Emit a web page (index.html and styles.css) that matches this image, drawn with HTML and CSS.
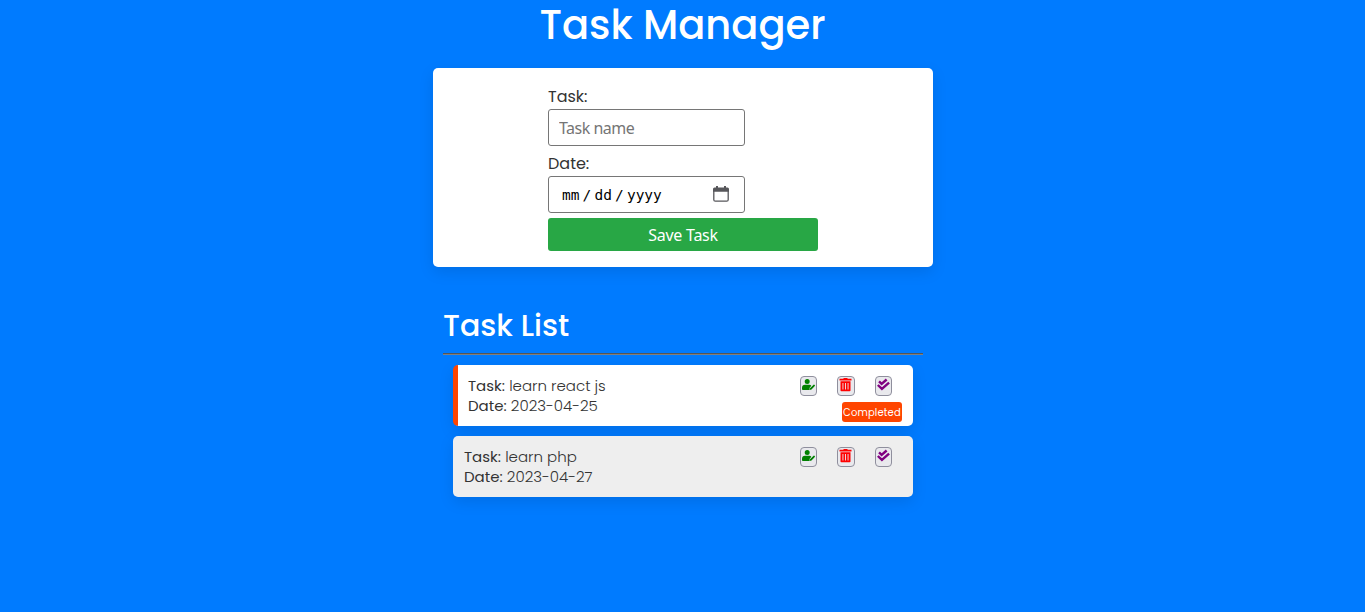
FILE: index.html
```html
<!DOCTYPE html>
<html lang="en">
<head>
<meta charset="utf-8">
<title>Task Manager</title>
<link rel="stylesheet" href="styles.css">
</head>
<body>
<svg class="sprite" aria-hidden="true">
  <symbol id="edit" viewBox="0 0 13 14"><path d="M5.2.9a2.5 2.5 0 1 1 0 5 2.5 2.5 0 0 1 0-5zM3 6.8h4.4q1.3 0 1.9.9L7.7 9.8l-.3 2.1H.8Q0 11.9 0 11V9.9q0-3.1 3-3.1zM8 10.3 11.6 6.8q.4-.4.8 0l.4.4q.4.5 0 .9L9.5 11.6 7.7 12z"/></symbol>
  <symbol id="trash" viewBox="0 0 12 14"><path fill-rule="evenodd" d="M4 0h4v.8h4v1.8H0V.8h4zM1 3.2h10v9.3q0 .8-.8.8H1.8q-.8 0-.8-.8zM3 5v6.5h.9V5zM5.55 5v6.5h.9V5zM8.1 5v6.5H9V5z"/></symbol>
  <symbol id="checks" viewBox="0 0 14 14"><path fill="none" stroke="currentColor" stroke-width="2.6" d="M2.2 3.2 5 5.9 10.4 1.1M.9 7 5.3 11.2 13 4.4"/></symbol>
</svg>
<h1 class="title">Task Manager</h1>
<main class="container">
  <form class="card">
    <div class="fields">
      <label class="label" for="task">Task:</label>
      <input class="input" id="task" type="text" placeholder="Task name">
      <span class="label label-date">Date:</span>
      <div class="input date">
        <span class="date-text">mm / dd / yyyy</span>
        <svg class="calendar" viewBox="0 0 16 16"><path fill="none" stroke="#57575b" stroke-width="1.3" d="M.8 4v9.7q0 1.5 1.5 1.5h11.4q1.5 0 1.5-1.5V4"/><path fill="#57575b" d="M3 0h2v1.5h6V0h2v1.5h1.5Q16 1.5 16 3v2.8H0V3q0-1.5 1.5-1.5H3z"/></svg>
      </div>
      <button class="save" type="button">Save Task</button>
    </div>
  </form>
  <section class="list">
    <h2 class="subtitle">Task List</h2>
    <hr class="rule">
    <article class="item done">
      <div class="details">
        <p class="line"><b class="key">Task:</b> learn react js</p>
        <p class="line"><b class="key">Date:</b> 2023-04-25</p>
      </div>
      <div class="side">
        <div class="actions">
          <button class="action edit" type="button"><svg><use href="#edit"/></svg></button>
          <button class="action trash" type="button"><svg><use href="#trash"/></svg></button>
          <button class="action checks" type="button"><svg><use href="#checks"/></svg></button>
        </div>
        <span class="badge">Completed</span>
      </div>
    </article>
    <article class="item pending">
      <div class="details">
        <p class="line"><b class="key">Task:</b> learn php</p>
        <p class="line"><b class="key">Date:</b> 2023-04-27</p>
      </div>
      <div class="side">
        <div class="actions">
          <button class="action edit" type="button"><svg><use href="#edit"/></svg></button>
          <button class="action trash" type="button"><svg><use href="#trash"/></svg></button>
          <button class="action checks" type="button"><svg><use href="#checks"/></svg></button>
        </div>
      </div>
    </article>
  </section>
</main>
</body>
</html>
```
FILE: styles.css
```css
* { box-sizing: border-box; margin: 0; padding: 0; }
body {
  background: #007bff;
  color: #333;
  font-family: Poppins, Inter, "Open Sans", sans-serif;
  min-height: 612px;
}
.sprite { display: none; }
.title {
  height: 68px;
  color: #fff;
  font-size: 40px;
  font-weight: 500;
  line-height: 50px;
  text-align: center;
}
.container { width: 500px; margin: 0 auto; position: relative; left: .5px; }
.card {
  height: 199px;
  padding: 17px 115px 16px;
  background: #fff;
  border-radius: 5px;
  box-shadow: 0 5px 15px rgba(0, 0, 0, .1);
}
.fields { display: flex; flex-direction: column; align-items: flex-start; }
.label { font-size: 16px; line-height: 24px; }
.label-date { margin-top: 6px; }
.input {
  width: 197px;
  height: 37px;
  padding: 0 10px;
  background: #fff;
  border: 1px solid #767676;
  border-radius: 3px;
  font-family: Tahoma, "Noto Sans", sans-serif;
  font-size: 16px;
  letter-spacing: -.5px;
}
.input::placeholder { color: #757575; }
.date {
  display: flex;
  align-items: center;
  justify-content: space-between;
  padding: 0 15px 2px 13px;
  color: #000;
}
.date-text {
  padding-top: 2px;
  font: 14.5px "DejaVu Sans Mono", monospace;
  letter-spacing: 0;
  word-spacing: -5.6px;
  white-space: nowrap;
}
.calendar { width: 16px; height: 16px; }
.save {
  width: 270px;
  height: 33px;
  margin-top: 5px;
  border: 0;
  border-radius: 3px;
  background: #28a745;
  color: #fff;
  font: 16px Tahoma, "Noto Sans", sans-serif;
  letter-spacing: -.25px;
}
.list { padding: 36px 10px 0; }
.subtitle {
  height: 50px;
  color: #fff;
  font-size: 30px;
  font-weight: 500;
  line-height: 45px;
}
.rule { height: 2px; border: 0; border-top: 1px solid #565656; border-bottom: 1px solid #808080; }
.item {
  display: flex;
  justify-content: space-between;
  height: 61px;
  margin: 10px 10px 0;
  border-radius: 5px;
  box-shadow: 0 5px 15px rgba(0, 0, 0, .1);
}
.done { padding: 11px 11px 0 10px; border-left: 5px solid #ff4500; background: #fff; }
.pending { padding: 11px 11px 0; background: #eee; }
.line { font-size: 15px; font-weight: 300; line-height: 20px; white-space: nowrap; }
.key { font-weight: 400; }
.side { display: flex; flex-direction: column; align-items: flex-end; }
.actions { display: flex; gap: 20px; padding-right: 10px; }
.action {
  display: flex;
  justify-content: center;
  width: 17.5px;
  height: 20px;
  padding-top: 1px;
  border: 1px solid #8f8f9d;
  border-radius: 4px;
  background: #e9e9ed;
}
.action svg { flex: none; width: 13px; height: 14px; fill: currentColor; }
.edit { color: green; }
.trash { color: red; }
.checks { color: purple; }
.badge {
  width: 60px;
  height: 20px;
  margin-top: 6px;
  border-radius: 3px;
  background: #ff4500;
  color: #fff;
  font-size: 10px;
  line-height: 21px;
  letter-spacing: .15px;
  text-align: center;
}
```
